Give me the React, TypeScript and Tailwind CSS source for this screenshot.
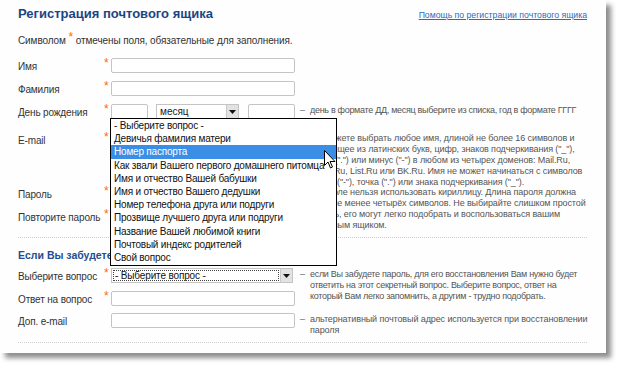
import type { ReactNode } from "react";

/* =========================================================
   MAIL REGISTRATION FORM
========================================================= */

const questions = [
  "- Выберите вопрос -",
  "Девичья фамилия матери",
  "Номер паспорта",
  "Как звали Вашего первого домашнего питомца",
  "Имя и отчество Вашей бабушки",
  "Имя и отчество Вашего дедушки",
  "Номер телефона друга или подруги",
  "Прозвище лучшего друга или подруги",
  "Название Вашей любимой книги",
  "Почтовый индекс родителей",
  "Свой вопрос",
];

function Arrow() {
  return (
    <div className="w-[12px] h-full bg-[#e2e2e2] border-l border-[#c8c8c8] flex items-center justify-center">
      <svg width="7" height="4" viewBox="0 0 7 4">
        <path d="M0 0h7L3.5 4z" fill="#111" />
      </svg>
    </div>
  );
}

function Input({ className = "" }: { className?: string }) {
  return (
    <div className={"h-[15px] shrink-0 border border-[#c4c4c4] rounded-[2px] bg-white " + className} />
  );
}

function Help({ lines, tight }: { lines: string[]; tight?: boolean }) {
  return (
    <div
      className={
        "flex ml-[5px] text-[9px] leading-[11px] text-[#555] whitespace-nowrap " +
        (tight ? "tracking-[-0.3px]" : "tracking-[-0.1px]")
      }
    >
      <span className="w-[10px] shrink-0 pt-[1px] text-[#666]">–</span>
      <div className="pt-[1px]">
        {lines.map((l, i) => (
          <div key={i}>{l}</div>
        ))}
      </div>
    </div>
  );
}

function Row({
  label,
  required,
  children,
  help,
  tight,
  className = "",
}: {
  label: string;
  required?: boolean;
  children?: ReactNode;
  help?: string[];
  tight?: boolean;
  className?: string;
}) {
  return (
    <div className={"flex h-[15px] " + className}>
      <div className="w-[85px] shrink-0 text-[10px] tracking-[-0.15px] leading-[15px] text-[#333] pt-[1px] whitespace-nowrap">
        {label}
      </div>
      <div className="w-[8px] shrink-0 text-[#ff6a00] text-[12px] leading-[10px] pl-[1px]">
        {required ? "*" : ""}
      </div>
      <div className="w-[184px] flex shrink-0">{children}</div>
      {help && <Help lines={help} tight={tight} />}
    </div>
  );
}

export default function App() {
  return (
    <div className="w-[620px] h-[365px] bg-white font-['Liberation_Sans',Arial,sans-serif]">

      {/* Panel */}
      <div className="relative w-[606px] h-[353px] bg-[#fefefe] shadow-[5px_5px_5px_rgba(0,0,0,0.45)] pl-[18px] pr-[19px]">

        {/* Header */}
        <div className="flex justify-between items-baseline pt-[6px]">
          <h1 className="text-[13px] leading-[15px] font-bold text-[#1b4584]">
            Регистрация почтового ящика
          </h1>
          <a className="text-[8.7px] text-[#2a6cbf] underline">
            Помощь по регистрации почтового ящика
          </a>
        </div>

        <div className="mt-[12px] text-[10px] tracking-[-0.1px] leading-[13px] text-[#333]">
          Символом <span className="relative -top-[3px] text-[12px] leading-[10px] text-[#ff6a00]">*</span> отмечены поля, обязательные для заполнения.
        </div>

        <Row label="Имя" required className="mt-[11px]">
          <Input className="w-full" />
        </Row>

        <Row label="Фамилия" required className="mt-[8px]">
          <Input className="w-full" />
        </Row>

        <Row
          label="День рождения"
          required
          tight
          className="mt-[8px]"
          help={["день в формате ДД, месяц выберите из списка, год в формате ГГГГ"]}
        >
          <Input className="w-[37px]" />
          <div className="ml-[8px] w-[83px] h-[15px] shrink-0 border border-[#c4c4c4] bg-white flex">
            <span className="flex-1 text-[10px] leading-[13px] pl-[3px] text-[#222]">месяц</span>
            <Arrow />
          </div>
          <Input className="ml-[9px] w-[47px]" />
        </Row>

        <Row
          label="E-mail"
          required
          className="mt-[13px]"
          help={[
            "Вы можете выбрать любое имя, длиной не более 16 символов и",
            "состоящее из латинских букв, цифр, знаков подчеркивания (\"_\"),",
            "точки (\".\") или минус (\"-\") в любом из четырех доменов: Mail.Ru,",
            "Inbox.Ru, List.Ru или BK.Ru. Имя не может начинаться с символов",
            "минус (\"-\"), точка (\".\") или знака подчеркивания (\"_\").",
          ]}
        >
          <Input className="w-full" />
        </Row>

        <Row
          label="Пароль"
          required
          className="mt-[39px]"
          help={[
            "В пароле нельзя использовать кириллицу. Длина пароля должна",
            "быть не менее четырёх символов. Не выбирайте слишком простой",
            "пароль, его могут легко подобрать и воспользоваться вашим",
            "почтовым ящиком.",
          ]}
        >
          <Input className="w-full" />
        </Row>

        <Row label="Повторите пароль" required className="mt-[8px]">
          <Input className="w-full" />
        </Row>

        <div className="mt-[13px] border-t border-dotted border-[#cfcfcf]" />

        <h2 className="mt-[10px] text-[10.5px] leading-[14px] font-bold text-[#1d4d8f]">
          Если Вы забудете пароль
        </h2>

        <Row
          label="Выберите вопрос"
          required
          tight
          className="mt-[6px]"
          help={[
            "если Вы забудете пароль, для его восстановления Вам нужно будет",
            "ответить на этот секретный вопрос. Выберите вопрос, ответ на",
            "который Вам легко запомнить, а другим - трудно подобрать.",
          ]}
        >
          <div className="w-[182px] h-[15px] shrink-0 border border-[#c4c4c4] bg-white flex">
            <div className="flex-1 m-[1px] border border-dotted border-[#444] text-[10px] tracking-[-0.15px] leading-[9px] pl-[1px] text-[#111]">
              - Выберите вопрос -
            </div>
            <Arrow />
          </div>
        </Row>

        <Row label="Ответ на вопрос" required className="mt-[8px]">
          <Input className="w-full" />
        </Row>

        <Row
          label="Доп. e-mail"
          className="mt-[7px]"
          help={[
            "альтернативный почтовый адрес используется при восстановлении",
            "пароля",
          ]}
        >
          <Input className="w-full" />
        </Row>

        <div className="mt-[14px] border-t border-dotted border-[#cfcfcf]" />

        {/* Open question list */}
        <div className="absolute left-[110px] top-[118px] w-[227px] h-[148px] border border-black bg-white text-[10px] tracking-[-0.2px] leading-[13.2px] text-[#111]">
          {questions.map((q, i) => (
            <div
              key={q}
              className={
                "pl-[3px] whitespace-nowrap " +
                (i === 2 ? "bg-[#3a8ee6] text-white" : "")
              }
            >
              {q}
            </div>
          ))}
        </div>

        {/* Mouse cursor */}
        <svg
          className="absolute left-[324px] top-[150px]"
          width="12"
          height="19"
          viewBox="0 0 12 19"
        >
          <path
            d="M0.5 0.5v15l3.5-3.5 2.5 6 2-1-2.5-5.5h5z"
            fill="#fff"
            stroke="#000"
            strokeWidth="1"
            strokeLinejoin="round"
          />
        </svg>

      </div>

    </div>
  );
}
